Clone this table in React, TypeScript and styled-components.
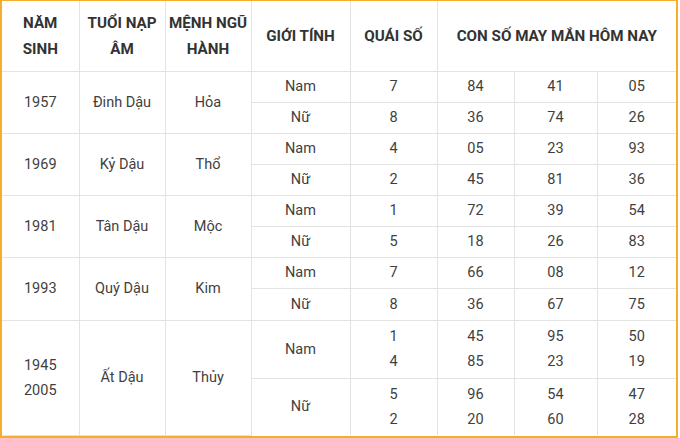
import React from "react";
import styled, { createGlobalStyle } from "styled-components";

const GlobalStyle = createGlobalStyle`
  html, body {
    margin: 0;
    padding: 0;
    background: #fff;
  }
  body {
    font-family: Roboto, "Noto Sans", "Liberation Sans", sans-serif;
  }
`;

const Frame = styled.div`
  width: 674px;
  border: 2px solid #f5ad2c;
  border-top-width: 1px;
  background: #fff;
`;

const Table = styled.table`
  width: 674px;
  border-collapse: collapse;
  table-layout: fixed;
  color: #3f3f3f;
  font-size: 14.5px;
`;

const Col = styled.col<{ w: number }>`
  width: ${(p) => p.w}px;
`;

const Row = styled.tr<{ h: number }>`
  height: ${(p) => p.h}px;
`;

const Th = styled.th`
  font-weight: 700;
  font-size: 15.2px;
  color: #333;
  text-transform: uppercase;
  line-height: 26px;
  padding: 0 2px;
  border: 1px solid #e3e3e3;
  border-top: none;
  text-align: center;
  vertical-align: middle;
  &:first-child {
    border-left: none;
  }
  &:last-child {
    border-right: none;
  }
`;

const Td = styled.td`
  font-weight: 400;
  line-height: 25px;
  padding: 0 4px;
  border: 1px solid #e3e3e3;
  text-align: center;
  vertical-align: middle;
  &:first-child {
    border-left: none;
  }
  &:last-child {
    border-right: none;
  }
`;

const LastRow = styled(Row)`
  td {
    border-bottom: none;
  }
`;

type Sub = { gender: string; quai: string[]; nums: string[][] };
type Group = { years: string[]; tuoi: string; menh: string; subs: Sub[]; h: number[] };

const colWidths = [77, 86, 86, 99, 87, 77, 83, 79];

const groups: Group[] = [
  {
    years: ["1957"],
    tuoi: "Đinh Dậu",
    menh: "Hỏa",
    h: [31, 31],
    subs: [
      { gender: "Nam", quai: ["7"], nums: [["84", "41", "05"]] },
      { gender: "Nữ", quai: ["8"], nums: [["36", "74", "26"]] },
    ],
  },
  {
    years: ["1969"],
    tuoi: "Kỷ Dậu",
    menh: "Thổ",
    h: [31, 31],
    subs: [
      { gender: "Nam", quai: ["4"], nums: [["05", "23", "93"]] },
      { gender: "Nữ", quai: ["2"], nums: [["45", "81", "36"]] },
    ],
  },
  {
    years: ["1981"],
    tuoi: "Tân Dậu",
    menh: "Mộc",
    h: [31, 31],
    subs: [
      { gender: "Nam", quai: ["1"], nums: [["72", "39", "54"]] },
      { gender: "Nữ", quai: ["5"], nums: [["18", "26", "83"]] },
    ],
  },
  {
    years: ["1993"],
    tuoi: "Quý Dậu",
    menh: "Kim",
    h: [31, 32],
    subs: [
      { gender: "Nam", quai: ["7"], nums: [["66", "08", "12"]] },
      { gender: "Nữ", quai: ["8"], nums: [["36", "67", "75"]] },
    ],
  },
  {
    years: ["1945", "2005"],
    tuoi: "Ất Dậu",
    menh: "Thủy",
    h: [58, 57],
    subs: [
      {
        gender: "Nam",
        quai: ["1", "4"],
        nums: [
          ["45", "95", "50"],
          ["85", "23", "19"],
        ],
      },
      {
        gender: "Nữ",
        quai: ["5", "2"],
        nums: [
          ["96", "54", "47"],
          ["20", "60", "28"],
        ],
      },
    ],
  },
];

const lines = (items: string[]) =>
  items.map((t, i) => (
    <React.Fragment key={i}>
      {i > 0 && <br />}
      {t}
    </React.Fragment>
  ));

export default function App() {
  return (
    <>
      <GlobalStyle />
      <Frame>
        <Table>
          <colgroup>
            {colWidths.map((w, i) => (
              <Col key={i} w={w} />
            ))}
          </colgroup>
          <thead>
            <Row h={70}>
              <Th>
                Năm
                <br />
                sinh
              </Th>
              <Th>
                Tuổi nạp
                <br />
                âm
              </Th>
              <Th>
                Mệnh ngũ
                <br />
                hành
              </Th>
              <Th>Giới tính</Th>
              <Th>Quái số</Th>
              <Th colSpan={3}>Con số may mắn hôm nay</Th>
            </Row>
          </thead>
          <tbody>
            {groups.map((g, gi) =>
              g.subs.map((s, si) => {
                const isLast = gi === groups.length - 1 && si === g.subs.length - 1;
                const R = isLast ? LastRow : Row;
                return (
                  <R key={`${gi}-${si}`} h={g.h[si]}>
                    {si === 0 && (
                      <>
                        <Td rowSpan={2}>{lines(g.years)}</Td>
                        <Td rowSpan={2}>{g.tuoi}</Td>
                        <Td rowSpan={2}>{g.menh}</Td>
                      </>
                    )}
                    <Td>{s.gender}</Td>
                    <Td>{lines(s.quai)}</Td>
                    {[0, 1, 2].map((c) => (
                      <Td key={c}>{lines(s.nums.map((n) => n[c]))}</Td>
                    ))}
                  </R>
                );
              })
            )}
          </tbody>
        </Table>
      </Frame>
    </>
  );
}
